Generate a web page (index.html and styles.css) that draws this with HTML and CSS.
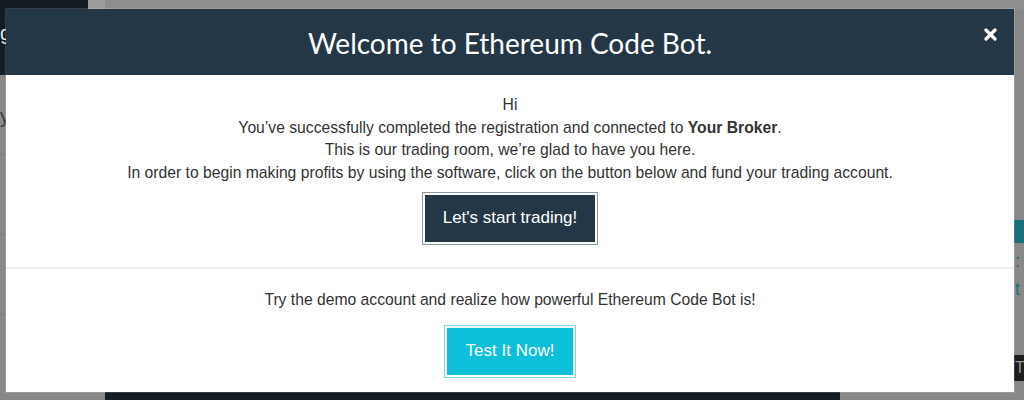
FILE: index.html
```html
<!DOCTYPE html>
<html lang="en">
<head>
    <meta charset="UTF-8">
    <meta name="viewport" content="width=device-width, initial-scale=1.0">
    <title>Ethereum Code Bot</title>
    <link rel="stylesheet" href="styles.css">
</head>
<body>
<div class="page">
    <div class="sidebar">
        <div class="sidebar-top"><span class="logo-letter">g</span></div>
        <div class="sidebar-item">y</div>
        <div class="sidebar-item"></div>
        <div class="sidebar-item"></div>
    </div>
    <div class="strip">
        <div class="strip-top"></div>
        <div class="strip-fill"></div>
    </div>
    <div class="main">
        <div class="main-top"></div>
        <div class="main-fill">
            <div class="right-side">
                <div class="teal-bar"></div>
                <div class="teal-text">:<br>t</div>
                <div class="dark-tag">T</div>
            </div>
        </div>
        <div class="main-bottom">
            <div class="footer-bar"></div>
        </div>
    </div>
</div>

<div class="modal">
    <div class="modal-header">
        <h2>Welcome to Ethereum Code Bot.</h2>
        <button class="close" aria-label="Close">
            <svg width="13" height="13" viewBox="0 0 13 13">
                <path d="M2 2 L11 11 M11 2 L2 11" stroke="#fff" stroke-width="3.2" stroke-linecap="round"/>
            </svg>
        </button>
    </div>
    <div class="modal-section">
        <p>Hi</p>
        <p>You’ve successfully completed the registration and connected to <b>Your Broker</b>.</p>
        <p>This is our trading room, we’re glad to have you here.</p>
        <p>In order to begin making profits by using the software, click on the button below and fund your trading account.</p>
        <div class="btn-frame dark-frame">
            <button class="btn btn-dark">Let's start trading!</button>
        </div>
    </div>
    <div class="modal-section demo">
        <p>Try the demo account and realize how powerful Ethereum Code Bot is!</p>
        <div class="btn-frame cyan-frame">
            <button class="btn btn-cyan">Test It Now!</button>
        </div>
    </div>
</div>
</body>
</html>
```

FILE: styles.css
```css
body {
    margin: 0;
    padding: 0;
    background: #888888;
    font-family: 'Liberation Sans', Arial, sans-serif;
    height: 400px;
    overflow: hidden;
    position: relative;
}

/* page behind the overlay */
.page {
    display: flex;
    height: 400px;
}

.sidebar {
    width: 88px;
    display: flex;
    flex-direction: column;
}

.sidebar-top {
    height: 75px;
    background: #141c24;
    color: #dfe4e8;
    font-size: 20px;
    padding-top: 22px;
    box-sizing: border-box;
}

.logo-letter {
    text-decoration: underline;
}

.sidebar-item {
    height: 80px;
    border-bottom: 1px solid #7d7d7d;
    color: #3a3a3a;
    font-size: 20px;
    padding-top: 30px;
    box-sizing: border-box;
}

.strip {
    width: 17px;
    display: flex;
    flex-direction: column;
}

.strip-top {
    height: 9px;
    background: #9c9c9c;
}

.strip-fill {
    flex: 1;
    background: #888888;
}

.main {
    flex: 1;
    display: flex;
    flex-direction: column;
}

.main-top {
    height: 9px;
    background: #8e8e8e;
}

.main-fill {
    flex: 1;
    display: flex;
    justify-content: flex-end;
}

.right-side {
    width: 10px;
    padding-top: 211px;
    display: flex;
    flex-direction: column;
}

.teal-bar {
    height: 23px;
    background: #1a6f7a;
}

.teal-text {
    color: #1c6f7c;
    font-size: 18px;
    line-height: 28px;
    margin-top: 4px;
    padding-left: 1px;
}

.dark-tag {
    margin-top: 52px;
    height: 26px;
    background: #1d1d1d;
    color: #9a9a9a;
    font-size: 16px;
    line-height: 26px;
    padding-left: 1px;
}

.main-bottom {
    height: 8px;
    display: flex;
}

.footer-bar {
    width: 735px;
    background: #141c24;
}

/* overlay modal */
.modal {
    position: absolute;
    top: 9px;
    left: 6px;
    width: 1008px;
    height: 383px;
    background: #fff;
    box-shadow: 0 0 0 1px rgba(255, 255, 255, 0.15);
}

.modal-header {
    height: 66px;
    background: #243746;
    display: flex;
    justify-content: center;
    align-items: center;
    position: relative;
}

.modal-header h2 {
    margin: 0;
    color: #fff;
    font-family: Lato, 'Open Sans', sans-serif;
    font-weight: 400;
    font-size: 28px;
    padding-top: 2px;
}

.close {
    position: absolute;
    right: 17px;
    top: 19px;
    background: none;
    border: none;
    padding: 0;
    cursor: pointer;
}

.modal-section {
    text-align: center;
    padding: 19px 0 22px;
    color: #333;
    font-size: 15.7px;
    line-height: 22.7px;
}

.modal-section p {
    margin: 0;
}

.demo {
    border-top: 2px solid #eeeeee;
    padding-top: 20px;
    padding-bottom: 0;
}

.btn-frame {
    display: inline-block;
    padding: 2px;
    margin-top: 7px;
    line-height: 0;
}

.dark-frame {
    border: 1px solid #8b99a4;
}

.cyan-frame {
    border: 1px solid #7fdbea;
    margin-top: 13px;
}

.btn {
    border: none;
    color: #fff;
    font-family: 'Liberation Sans', Arial, sans-serif;
    font-size: 17px;
    cursor: pointer;
}

.btn-dark {
    background: #243746;
    width: 170px;
    height: 47px;
}

.btn-cyan {
    background: #0dbfd9;
    width: 126px;
    height: 47px;
}
```
